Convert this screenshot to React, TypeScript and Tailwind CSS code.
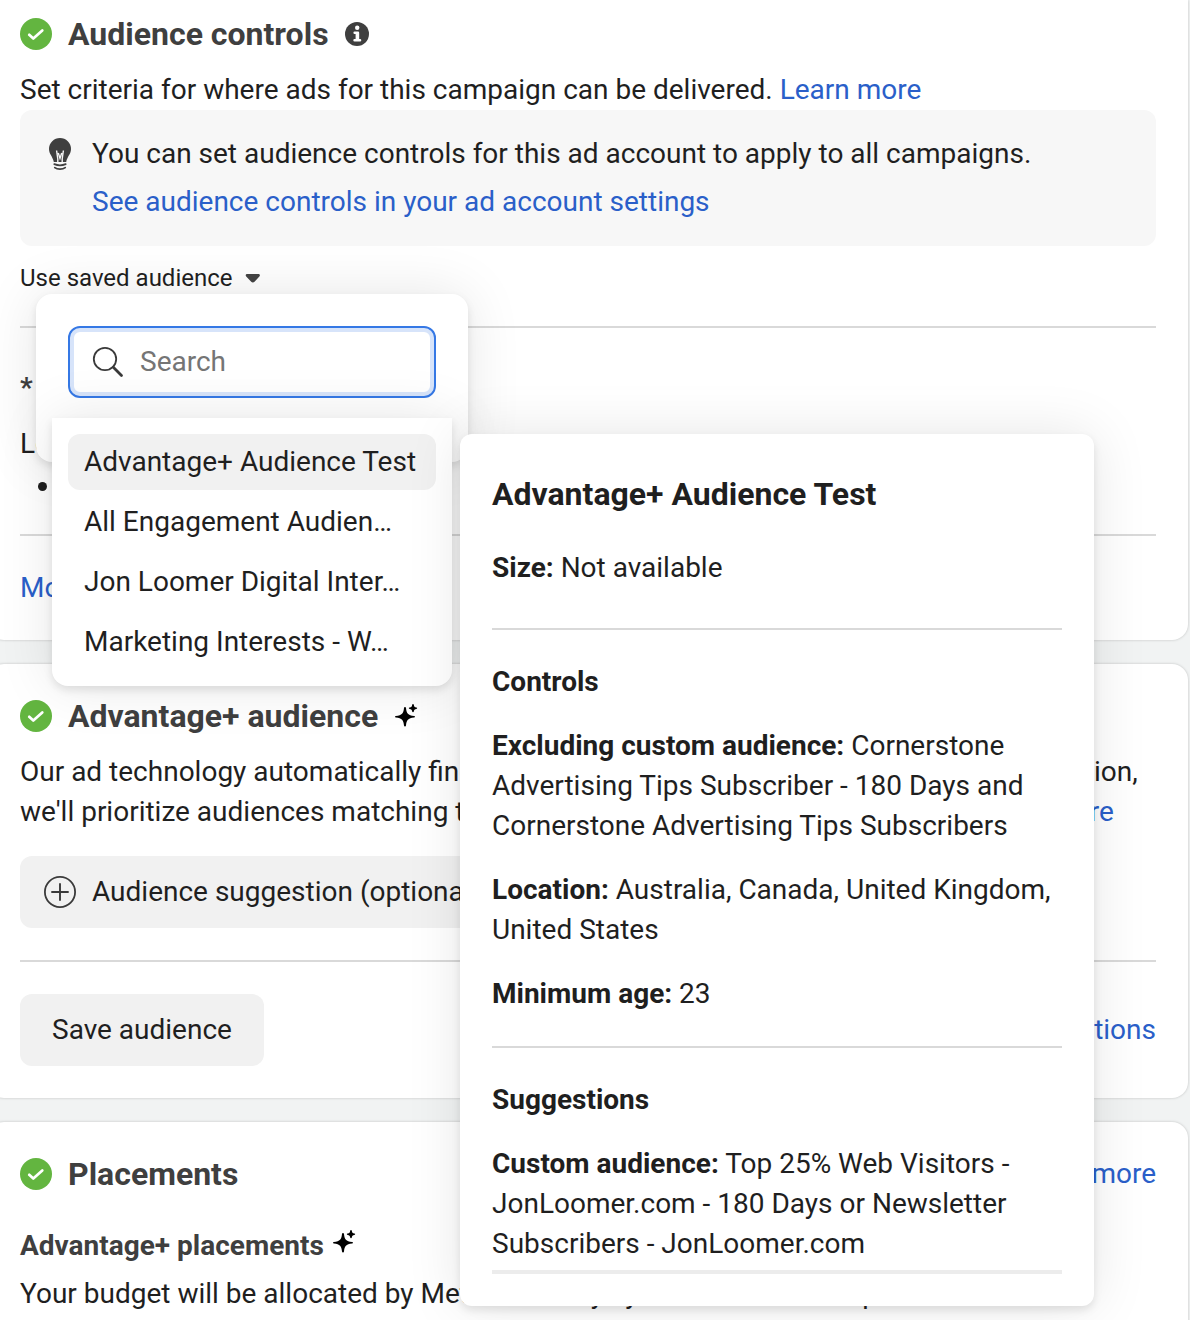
import React, { useState } from 'react';

interface SavedAudience {
  id: string;
  label: string;
}

const savedAudiences: SavedAudience[] = [
  { id: 'advantage', label: 'Advantage+ Audience Test' },
  { id: 'engagement', label: 'All Engagement Audien…' },
  { id: 'jon-loomer', label: 'Jon Loomer Digital Inter…' },
  { id: 'marketing', label: 'Marketing Interests - W…' },
];

const CheckBadge: React.FC = () => (
  <svg className="size-8 shrink-0" viewBox="0 0 32 32" fill="none" aria-hidden="true">
    <circle cx="16" cy="16" r="16" fill="#63b540" />
    <path d="M9.2 16.800l4.100 3.800 9-8.200" stroke="#fff" strokeWidth="2.700" strokeLinecap="round" strokeLinejoin="round" />
  </svg>
);

const InfoIcon: React.FC = () => (
  <svg className="size-6 shrink-0" viewBox="0 0 24 24" aria-hidden="true">
    <circle cx="12" cy="12" r="12" fill="#3f3f3f" />
    <circle cx="12.200" cy="5.800" r="2.200" fill="#fff" />
    <path d="M9.600 9.600h3.400a1.200 1.200 0 0 1 1.200 1.200v6.200h.8a1.300 1.300 0 0 1 0 2.600H9.600a1.300 1.300 0 0 1 0-2.600h1V12h-1a1.200 1.200 0 0 1 0-2.400z" fill="#fff" />
  </svg>
);

const BulbIcon: React.FC = () => (
  <svg className="h-8 w-6 shrink-0" viewBox="0 0 24 32" fill="none" aria-hidden="true">
    <path d="M12 0a11 11 0 0 1 11 11c0 5-3.800 7.600-4.800 13H5.800C4.800 18.600 1 16 1 11A11 11 0 0 1 12 0z" fill="#3f3f3f" />
    <path d="M8.600 12.500l1.200 8.500v3.500M15.400 12.500l-1.200 8.500v3.500M10.300 15l1.700 5.500 1.700-5.500" stroke="#f7f7f7" strokeWidth="1.400" />
    <path d="M6.300 26.200c3 1.200 8.400 1.200 11.400 0M6.800 29.600c2.600 2 7.800 2 10.400 0" stroke="#3f3f3f" strokeWidth="1.800" strokeLinecap="round" />
  </svg>
);

const SparkleIcon: React.FC = () => (
  <svg className="size-6 shrink-0" viewBox="0 0 24 24" fill="#000" aria-hidden="true">
    <path d="M11 3c.6 0 .9.400 1 .9.600 5.600 1.900 7.200 8.100 8.100.6.100.9.400.9.800s-.3.700-.9.800c-6.200.800-7.500 2.300-8.100 8-.1.500-.4.900-1 .9s-.9-.4-1-.9c-.600-5.700-1.900-7.200-8.100-8-.6-.1-.9-.4-.9-.8s.3-.7.900-.8C8.100 11.100 9.400 9.500 10 3.900c.1-.500.4-.9 1-.9z" />
    <path d="M19 0c.5 0 .7.300.8.700.3 1.900.7 2.400 2.600 2.700.5.100.8.300.8.700s-.3.700-.8.800c-1.900.2-2.300.700-2.600 2.600-.1.400-.3.700-.8.700s-.7-.3-.8-.7c-.3-1.900-.7-2.400-2.600-2.600-.5-.1-.8-.4-.8-.8s.3-.6.800-.7c1.900-.3 2.300-.8 2.600-2.700.1-.4.300-.7.800-.7z" />
  </svg>
);

const SearchIcon: React.FC = () => (
  <svg className="size-8 shrink-0" viewBox="0 0 32 32" fill="none" stroke="#3a3a3a" strokeLinecap="round" aria-hidden="true">
    <circle cx="13" cy="13" r="11.200" strokeWidth="1.800" />
    <path d="M21.300 21.300l8.200 8.200" strokeWidth="2.800" />
  </svg>
);

const PlusCircleIcon: React.FC = () => (
  <svg className="size-8 shrink-0" viewBox="0 0 32 32" fill="none" stroke="#3a3a3a" strokeLinecap="round" aria-hidden="true">
    <circle cx="16" cy="16" r="15.100" strokeWidth="1.800" />
    <path d="M16 8v16M8 16h16" strokeWidth="1.900" />
  </svg>
);

const CaretIcon: React.FC = () => (
  <svg className="h-3 w-4 shrink-0" viewBox="0 0 16 12" fill="#444" aria-hidden="true">
    <path d="M2.200 2h11.200c1.500 0 2 1.500 1 2.600l-4.900 5.200c-.9 1-2.400 1-3.300 0L1.200 4.600C.2 3.500.7 2 2.200 2z" />
  </svg>
);

const Card: React.FC<{ className?: string; children: React.ReactNode }> = ({ className = '', children }) => (
  <section className={`rounded-2xl bg-white px-8 shadow-[0_0_3px_rgba(0,0,0,0.2)] ${className}`}>{children}</section>
);

const Divider: React.FC<{ className?: string }> = ({ className = '' }) => (
  <hr className={`border-t-2 border-[#d9d9d9] ${className}`} />
);

const TextLink: React.FC<{ children: React.ReactNode }> = ({ children }) => (
  <a href="#" className="text-[#2a5fc9]">
    {children}
  </a>
);

const SectionTitle: React.FC<{ title: string; icon?: React.ReactNode }> = ({ title, icon }) => (
  <div className="flex h-10 items-center gap-4">
    <CheckBadge />
    <h2 className="text-[32px] leading-10 font-bold whitespace-nowrap text-[#3f3f3f]">{title}</h2>
    {icon}
  </div>
);

const AudiencePreview: React.FC = () => (
  <aside className="absolute top-[140px] left-[424px] w-[634px] rounded-xl bg-white px-8 pt-10 pb-8 shadow-[0_4px_8px_rgba(0,0,0,0.1),0_0_56px_rgba(0,0,0,0.1)]">
    <h3 className="text-[32px] leading-10 font-bold">Advantage+ Audience Test</h3>
    <p className="mt-[34px]">
      <b>Size:</b> Not available
    </p>
    <Divider className="mt-10" />
    <h4 className="mt-8 font-bold">Controls</h4>
    <p className="mt-6">
      <b>Excluding custom audience:</b> Cornerstone Advertising Tips Subscriber - 180 Days and Cornerstone Advertising
      Tips Subscribers
    </p>
    <p className="mt-6">
      <b>Location:</b> Australia, Canada, United Kingdom, United States
    </p>
    <p className="mt-6">
      <b>Minimum age:</b> 23
    </p>
    <Divider className="mt-8" />
    <h4 className="mt-8 font-bold">Suggestions</h4>
    <p className="mt-6">
      <b>Custom audience:</b> Top 25% Web Visitors - JonLoomer.com - 180 Days or Newsletter Subscribers -
      JonLoomer.com
    </p>
    <hr className="mt-[6px] border-t-4 border-[#ececec]" />
  </aside>
);

const SavedAudienceMenu: React.FC = () => {
  const [activeId, setActiveId] = useState<string>('advantage');

  return (
    <div className="absolute top-full left-4 z-10 h-[168px] w-[432px] rounded-2xl bg-white p-8 shadow-[0_4px_8px_rgba(0,0,0,0.1),0_0_56px_rgba(0,0,0,0.1)]">
      <label className="flex h-[72px] items-center gap-4 rounded-xl border-2 border-[#3578e5] px-[22px] shadow-[inset_0_0_0_4px_#d7e4fa]">
        <SearchIcon />
        <input
          type="text"
          placeholder="Search"
          aria-label="Search"
          className="w-full min-w-0 bg-transparent outline-none placeholder:text-[#757575]"
        />
      </label>

      {/* Audience list */}
      <ul className="absolute top-[124px] left-4 flex w-[400px] flex-col gap-1 rounded-b-2xl bg-white p-4 shadow-[0_4px_8px_rgba(0,0,0,0.1),0_0_56px_rgba(0,0,0,0.1)]">
        {savedAudiences.map((audience) => (
          <li key={audience.id}>
            <button
              type="button"
              onMouseEnter={() => setActiveId(audience.id)}
              className={`block h-14 w-full rounded-xl px-4 text-left whitespace-nowrap ${
                audience.id === activeId ? 'bg-[#f1f1f1]' : ''
              }`}
            >
              {audience.label}
            </button>
          </li>
        ))}
      </ul>

      <AudiencePreview />
    </div>
  );
};

const App: React.FC = () => {
  return (
    <div className="h-screen overflow-hidden bg-[#f1f3f3] font-['Roboto',sans-serif] text-[28px] leading-10 text-[#1f1f1f]">
      <main className="-ml-3 flex flex-col gap-6 pr-0.5">
        {/* Audience controls */}
        <Card className="rounded-t-none pt-3.5 pb-8">
          <SectionTitle title="Audience controls" icon={<InfoIcon />} />
          <p className="mt-4">
            Set criteria for where ads for this campaign can be delivered. <TextLink>Learn more</TextLink>
          </p>
          <div className="flex gap-4 rounded-xl bg-[#f7f7f7] p-6">
            <div className="flex w-8 justify-center pt-1">
              <BulbIcon />
            </div>
            <div className="flex flex-col gap-2">
              <p>You can set audience controls for this ad account to apply to all campaigns.</p>
              <TextLink>See audience controls in your ad account settings</TextLink>
            </div>
          </div>
          <div className="relative mt-4">
            <button type="button" className="flex items-center gap-3 text-2xl leading-8">
              Use saved audience
              <CaretIcon />
            </button>
            <SavedAudienceMenu />
          </div>
          <Divider className="mt-8" />
          <h3 className="mt-10 font-bold text-[#3f3f3f]">* Locations</h3>
          <p className="mt-4">Location:</p>
          <ul className="mt-0.5 list-disc pl-[42px]">
            <li>United States</li>
          </ul>
          <Divider className="mt-7" />
          <div className="mt-8">
            <TextLink>More options</TextLink>
          </div>
        </Card>

        {/* Advantage+ audience */}
        <Card className="py-8">
          <SectionTitle title="Advantage+ audience" icon={<SparkleIcon />} />
          <p className="mt-4">
            Our ad technology automatically finds your audience. If you share an audience suggestion, we'll prioritize
            audiences matching this profile before searching more widely. <TextLink>Learn more</TextLink>
          </p>
          <button type="button" className="mt-6 flex h-[72px] items-center gap-4 rounded-xl bg-[#f1f1f1] px-6">
            <PlusCircleIcon />
            Audience suggestion (optional)
          </button>
          <Divider className="mt-8" />
          <div className="mt-8 flex items-center justify-between">
            <button type="button" className="h-[72px] rounded-xl bg-[#f1f1f1] px-8">
              Save audience
            </button>
            <TextLink>Switch to original audience options</TextLink>
          </div>
        </Card>

        {/* Placements */}
        <Card className="py-8">
          <div className="flex items-center justify-between">
            <SectionTitle title="Placements" />
            <TextLink>Learn more</TextLink>
          </div>
          <div className="mt-8 flex gap-2">
            <h3 className="font-bold text-[#3f3f3f]">Advantage+ placements</h3>
            <div className="pt-1">
              <SparkleIcon />
            </div>
          </div>
          <p className="mt-2 max-w-4xl">
            Your budget will be allocated by Meta's delivery system across multiple placements based on where they're
            likely to perform best.
          </p>
        </Card>
      </main>
    </div>
  );
};

export default App;
